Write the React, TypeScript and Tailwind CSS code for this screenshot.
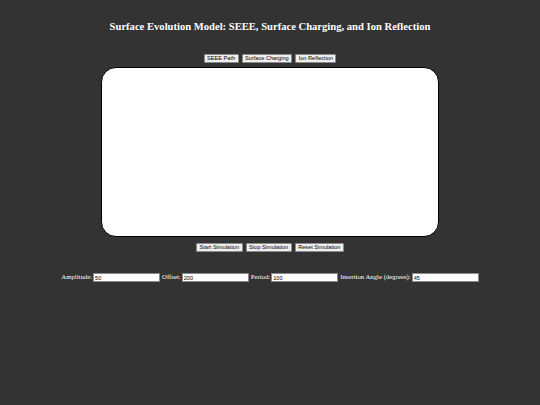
import React from 'react';

const btn =
  "h-[9px] px-[2.5px] bg-[#efefef] border-[0.5px] border-[#8a8a8a] rounded-[1px] text-[5.6px] leading-none text-black font-['Liberation_Sans',Arial,sans-serif]";

const Field = ({ label, value }: { label: string; value: string }) => (
  <div className="flex items-center gap-[1px]">
    <span className="text-[6.75px] leading-none text-white">{label}</span>
    <input
      defaultValue={value}
      className="w-[67px] h-[9px] bg-white border-[0.5px] border-[#8a8a8a] px-[1px] text-[5.6px] leading-none text-black font-['Liberation_Sans',Arial,sans-serif] outline-none"
    />
  </div>
);

export default function App() {
  return (
    <div className="w-[540px] h-[405px] bg-[#333333] flex flex-col items-center font-['Liberation_Serif','Times_New_Roman',serif]">
      <h1 className="mt-[19px] h-[16px] text-[10.6px] leading-[16px] font-bold text-white">
        Surface Evolution Model: SEEE, Surface Charging, and Ion Reflection
      </h1>

      <div className="mt-[19px] flex gap-[3px]">
        <button className={btn}>SEEE Path</button>
        <button className={btn}>Surface Charging</button>
        <button className={btn}>Ion Reflection</button>
      </div>

      <div className="mt-[4px] w-[338px] h-[170px] bg-white border border-black rounded-[15px]" />

      <div className="mt-[6px] flex gap-[3px]">
        <button className={btn}>Start Simulation</button>
        <button className={btn}>Stop Simulation</button>
        <button className={btn}>Reset Simulation</button>
      </div>

      <div className="mt-[21px] flex items-center gap-[2px]">
        <Field label="Amplitude:" value="50" />
        <Field label="Offset:" value="200" />
        <Field label="Period:" value="100" />
        <Field label="Insertion Angle (degrees):" value="45" />
      </div>
    </div>
  );
}
